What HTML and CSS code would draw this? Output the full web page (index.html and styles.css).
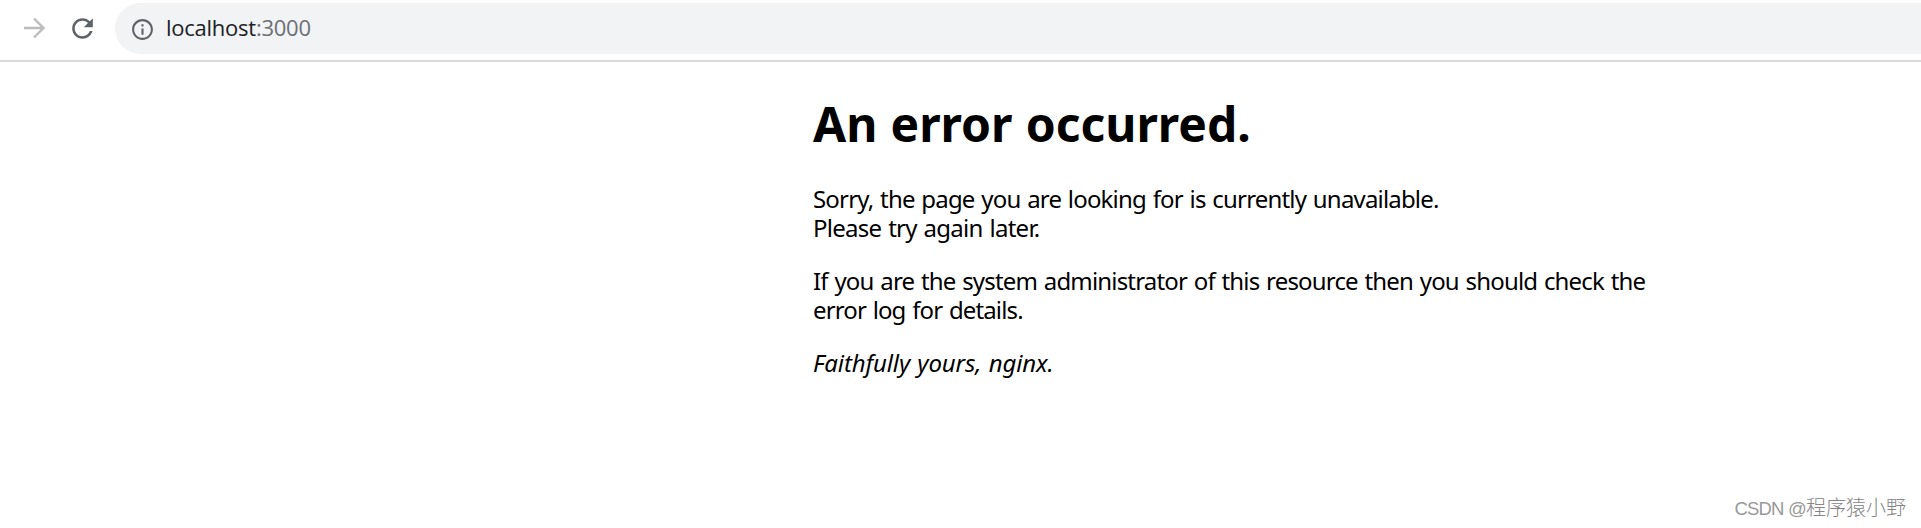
FILE: index.html
```html
<!DOCTYPE html>
<html lang="en">
<head>
<meta charset="utf-8">
<title>Error</title>
<link rel="stylesheet" href="styles.css">
</head>
<body>
<header class="toolbar">
  <svg class="forward" viewBox="0 0 24 24"><path d="M4 12h15.2M12 4.400l7.600 7.600-7.600 7.600"/></svg>
  <svg class="reload" viewBox="0 0 24 24"><path d="M17.650 6.350C16.200 4.900 14.210 4 12 4c-4.420 0-7.990 3.580-7.990 8s3.570 8 7.990 8c3.730 0 6.840-2.550 7.730-6h-2.080c-.82 2.330-3.040 4-5.650 4-3.310 0-6-2.690-6-6s2.690-6 6-6c1.660 0 3.140.69 4.220 1.780L13 11h7V4l-2.350 2.350z"/></svg>
  <div class="omnibox">
    <svg class="info" viewBox="0 0 24 24"><path d="M11 7h2v2h-2zm0 4h2v6h-2zm1-9C6.480 2 2 6.480 2 12s4.480 10 10 10 10-4.480 10-10S17.520 2 12 2zm0 18c-4.410 0-8-3.590-8-8s3.590-8 8-8 8 3.590 8 8-3.590 8-8 8z"/></svg>
    <span class="url">localhost<span class="port">:3000</span></span>
  </div>
</header>
<main class="message">
  <h1 class="title">An error occurred.</h1>
  <p><span class="sorry">Sorry, the page you are looking for is currently unavailable.</span><br><span class="retry">Please try again later.</span></p>
  <p><span class="admin">If you are the system administrator of this resource then you should check the</span><br><span class="log">error log for details.</span></p>
  <p><em class="sign">Faithfully yours, nginx.</em></p>
</main>
<div class="watermark"><span class="latin">CSDN @</span>程序猿小野</div>
</body>
</html>
```
FILE: styles.css
```css
body {
  margin: 0;
  height: 528px;
  overflow: hidden;
  position: relative;
  background: #fff;
  color: #000;
  font-family: "Noto Sans", sans-serif;
}
.toolbar {
  display: flex;
  align-items: flex-start;
  height: 60px;
  border-bottom: 2px solid #d9dadc;
}
.forward {
  width: 30px;
  height: 30px;
  margin: 13px 0 0 19px;
  fill: none;
  stroke: #babcbe;
  stroke-width: 1.9;
}
.reload {
  width: 31px;
  height: 31px;
  margin: 13px 0 0 18px;
  fill: #5f6368;
}
.omnibox {
  flex: 1;
  display: flex;
  align-items: center;
  height: 51px;
  margin: 3px 0 0 17px;
  padding-left: 15px;
  border-radius: 26px 0 0 26px;
  background: #f1f3f4;
}
.info {
  width: 25px;
  height: 25px;
  margin-top: 2px;
  fill: #5f6368;
}
.url {
  margin: -3px 0 0 11px;
  font: 22px/30px "Open Sans", sans-serif;
  letter-spacing: -0.25px;
  color: #202124;
  white-space: nowrap;
}
.port { color: #6b6f74; }
.message {
  width: 840px;
  margin: 33px 0 0 813px;
  font-size: 24px;
  line-height: 29px;
  word-spacing: 1.3px;
  white-space: nowrap;
}
.title {
  margin: 0 0 31px;
  font-size: 48px;
  line-height: 58px;
  word-spacing: 0.6px;
}
.message p { margin: 0 0 24px; }
.sorry { letter-spacing: -0.82px; }
.retry { letter-spacing: -0.73px; }
.admin { letter-spacing: -0.83px; }
.log { letter-spacing: -0.87px; }
.sign { letter-spacing: -0.13px; }
.watermark {
  position: absolute;
  right: 15px;
  bottom: 6px;
  font: 20px/26px "Liberation Sans", "Noto Sans CJK SC", sans-serif;
  font-weight: 300;
  color: #858585;
}
.latin {
  font-size: 18.5px;
  letter-spacing: -0.8px;
  color: #999;
}
```
